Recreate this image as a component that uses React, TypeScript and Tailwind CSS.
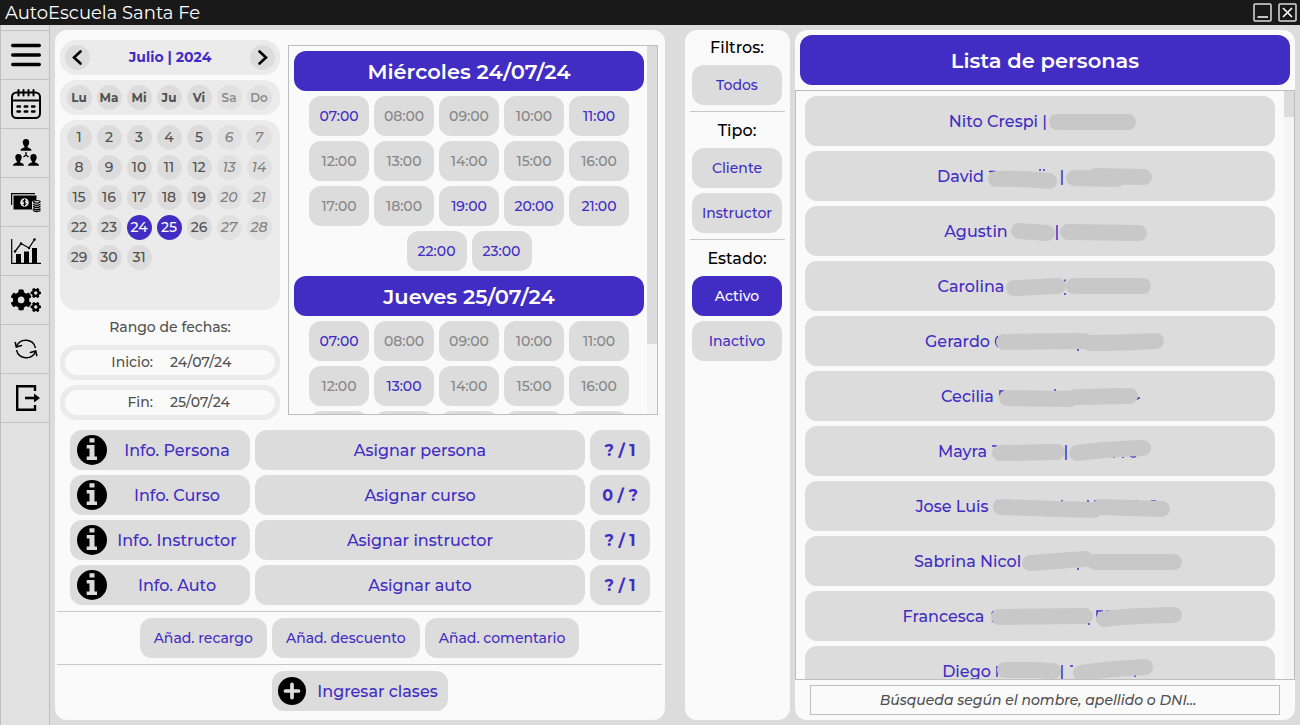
import type { ReactNode } from "react";
import { FaCogs } from "react-icons/fa";

const weekdays = ["Lu", "Ma", "Mi", "Ju", "Vi", "Sa", "Do"];
const days = Array.from({ length: 31 }, (_, i) => i + 1);
const selectedDays = [24, 25];

const schedule = [
  { title: "Miércoles 24/07/24", from: 7, to: 23, free: [7, 11, 19, 20, 21, 22, 23] },
  { title: "Jueves 25/07/24", from: 7, to: 23, free: [7, 13] },
];

const assignments = [
  { info: "Info. Persona", action: "Asignar persona", count: "? / 1" },
  { info: "Info. Curso", action: "Asignar curso", count: "0 / ?" },
  { info: "Info. Instructor", action: "Asignar instructor", count: "? / 1" },
  { info: "Info. Auto", action: "Asignar auto", count: "? / 1" },
];

/* `start` and `end` are the horizontal span of the masked part inside a 470-wide row. */
type Person = {
  name: string;
  start: number;
  end: number;
  mask: string;
  bar?: number;
  marks?: string;
};

const people: Person[] = [
  { name: "Nito Crespi |", start: 243, end: 327, mask: "M253 26L324 26" },
  { name: "David", start: 179, end: 338, mask: "M191 28Q215 27 244 30M269 27L312 28M290 25L339 26", bar: 257, marks: "M184 20.5h7M235 20v-2M239 20v-2M268 20.500h5M275 20.500h4" },
  { name: "Agustin", start: 203, end: 331, mask: "M214 25L242 27M263 26L334 27", bar: 252 },
  { name: "Carolina", start: 199, end: 337, mask: "M209 27L253 25M269 25L338 25", marks: "M260 18.500v2M260 32v2" },
  { name: "Gerardo", start: 186, end: 351, mask: "M200 26L280 25M286 27Q315 27 352 25", marks: "M194 20Q189 25 194 31M274 33v2" },
  { name: "Cecilia", start: 189, end: 334, mask: "M202 27L265 28M270 26L325 25", marks: "M195 25V20H199M250 18v2M332 29l1 -2h2" },
  { name: "Mayra", start: 182, end: 337, mask: "M195 27L252 26M272 27Q300 23 338 22", bar: 261, marks: "M187 20h5M208 20h2M309 31v1M318 31v1M325 30q4 2 6 0" },
  { name: "Jose Luis", start: 184, end: 360, mask: "M196 26Q245 28 289 29M295 26L357 28", marks: "M191 20h1M256 20h2M283 22v-3M289 20h4M307 20h8M328 20h5M346 20h5" },
  { name: "Sabrina Nicol", start: 216, end: 361, mask: "M225 27L280 23M290 26L369 26", marks: "M273 32v2" },
  { name: "Francesca", start: 180, end: 373, mask: "M195 26L281 25M300 28Q320 25 370 24", marks: "M190 20q-3 2 -1 4M188 30l2 1M285 34v-2M293 26V20h6M302 20h4" },
  { name: "Diego", start: 185, end: 332, mask: "M199 24H230L247 25M275 27Q300 23 339 21", bar: 256, marks: "M191 20v11M264 20h3M328 30h2" },
];

function Glyph({ children, className = "size-[30px]" }: { children: ReactNode; className?: string }) {
  return (
    <svg viewBox="0 0 30 30" className={className} fill="none" stroke="black" aria-hidden="true">
      {children}
    </svg>
  );
}

const MenuGlyph = () => (
  <Glyph>
    <path d="M1.700 5.500h26.600M1.700 15h26.600M1.700 24.500h26.600" strokeWidth="3.400" strokeLinecap="round" />
  </Glyph>
);

const CalendarGlyph = () => (
  <Glyph>
    <rect x="1" y="3.500" width="28" height="25.500" rx="4.500" strokeWidth="2" />
    <path d="M1 11.500h28" strokeWidth="2" />
    <path d="M7.500 1v5.500M12.500 1v5.500M17.500 1v5.500M22.500 1v5.500" strokeWidth="2" strokeLinecap="round" />
    <path d="M6.500 17.500h2.500M13.700 17.500h2.600M21 17.500h2.500M6.500 22.500h2.500M13.700 22.500h2.600M21 22.500h2.500" strokeWidth="2.400" strokeLinecap="round" />
  </Glyph>
);

const person = "M0 -6.500C2.200 -6.500 3.400 -5 3.200 -2.800C3 -1.200 2.300 0 1.600 .8V2C4 2.800 5.500 3.200 5.500 5.200H-5.500C-5.500 3.200 -4 2.800 -1.600 2V.8C-2.300 0 -3 -1.200 -3.200 -2.800C-3.400 -5 -2.200 -6.500 0 -6.500Z";

const PeopleGlyph = () => (
  <Glyph>
    <g fill="black" stroke="none">
      <path d={person} transform="translate(15 7.500)" />
      <path d={person} transform="translate(7.500 22.500)" />
      <path d={person} transform="translate(22.500 22.500)" />
    </g>
    <path d="M15 14v3.500M15 17l-2.500 2M15 17l2.500 2" strokeWidth="1.300" />
  </Glyph>
);

const MoneyGlyph = () => (
  <Glyph>
    <path d="M.6 18V6.600H24" strokeWidth="1.200" />
    <path d="M2.500 8.500H25.500V22.500H2.500Z" fill="black" stroke="none" />
    <circle cx="13.500" cy="15.500" r="4.300" fill="#e1e1e1" stroke="none" />
    <path d="M15 13.800C14.500 12.800 12 12.900 12 14.300C12 15.800 15 15 15 16.700C15 18.200 12.300 18.200 11.900 17M13.500 12v7" strokeWidth="1" />
    <path d="M21 14.500Q25.500 11 30 14.500V22Q25.500 26 21 22Z" fill="#e1e1e1" stroke="none" />
    <ellipse cx="25.800" cy="14.800" rx="3.300" ry="1.300" strokeWidth="1.200" />
    <path d="M22 17.200q3.800 2.200 7.500 0M22 19.400q3.800 2.200 7.500 0M22 21.600q3.800 2.200 7.500 0M22 23.500q3.800 2 7.500 0" strokeWidth="1.300" />
  </Glyph>
);

const ChartGlyph = () => (
  <Glyph>
    <path d="M.7 3V27.300H30" strokeWidth="1.200" />
    <path d="M5 18h5v9H5ZM13 15.500h5V27H13ZM21 12h5V27H21Z" fill="black" stroke="none" />
    <path d="M4 15.500L10 7.500L18 12L23.500 3.500" strokeWidth="1.300" />
    <g fill="black" stroke="none">
      <circle cx="4" cy="15.500" r="1.200" />
      <circle cx="10" cy="7.500" r="1.200" />
      <circle cx="18" cy="12" r="1.200" />
      <circle cx="23.500" cy="3.500" r="1.300" />
    </g>
  </Glyph>
);

const RefreshGlyph = () => (
  <Glyph>
    <path d="M5.500 12.500A10 10 0 0 1 24.500 14M24.500 17.500A10 10 0 0 1 5.500 16" strokeWidth="1.400" />
    <path d="M4.300 8.500L5.300 13L10.500 11.500M25.700 21.500L24.700 17L19.500 18.500" strokeWidth="1.600" strokeLinecap="round" />
  </Glyph>
);

const ExitGlyph = () => (
  <Glyph>
    <path d="M24 8V3.200H6.200V26.800H24V22" strokeWidth="2.400" />
    <path d="M14 15H25" strokeWidth="2.600" />
    <path d="M23 10.500L29 15L23 19.500Z" fill="black" stroke="none" />
  </Glyph>
);

const InfoGlyph = () => (
  <Glyph className="size-[30px] shrink-0">
    <circle cx="15" cy="15" r="15" fill="black" stroke="none" />
    <path d="M12.500 3.200h5v4.300h-5ZM9.700 10h7.800v11.500H20V25H9.700V21.500h2.800V13.500H9.700Z" fill="#dcdcdc" stroke="none" />
  </Glyph>
);

const PlusGlyph = () => (
  <Glyph className="size-[28px] shrink-0">
    <circle cx="15" cy="15" r="15" fill="black" stroke="none" />
    <path d="M15 8v14M8 15h14" stroke="#dcdcdc" strokeWidth="4" strokeLinecap="round" />
  </Glyph>
);

const nav = [
  { label: "Menú", icon: <MenuGlyph /> },
  { label: "Calendario", icon: <CalendarGlyph /> },
  { label: "Personas", icon: <PeopleGlyph /> },
  { label: "Pagos", icon: <MoneyGlyph /> },
  { label: "Estadísticas", icon: <ChartGlyph /> },
  { label: "Ajustes", icon: <FaCogs className="size-[30px] text-black" aria-hidden="true" /> },
  { label: "Actualizar", icon: <RefreshGlyph /> },
  { label: "Salir", icon: <ExitGlyph /> },
];

function TitleBar() {
  return (
    <header className="flex h-[25px] shrink-0 items-center justify-between bg-[#191919] pr-[3px] pl-[5px] text-white">
      <h1 className="pt-[2px] text-[18px] font-normal">AutoEscuela Santa Fe</h1>
      <div className="flex gap-[6px]">
        <button aria-label="Minimizar">
          <svg viewBox="0 0 19 19" className="size-[19px]" fill="none" stroke="#dcdcdc">
            <rect x="1" y="1" width="17" height="17" rx="1" strokeWidth="1.500" />
            <path d="M4.500 14h10.500" stroke="white" strokeWidth="1.500" />
          </svg>
        </button>
        <button aria-label="Cerrar">
          <svg viewBox="0 0 19 19" className="size-[19px]" fill="none" stroke="#dcdcdc">
            <rect x="1" y="1" width="17" height="17" rx="1" strokeWidth="1.500" />
            <path d="M5 5l9 9M14 5l-9 9" stroke="white" strokeWidth="1.600" />
          </svg>
        </button>
      </div>
    </header>
  );
}

function Sidebar() {
  return (
    <nav className="w-[50px] shrink-0 border-x border-[#bebebe] bg-[#e1e1e1] pt-[5px]">
      <ul className="border-t border-[#c3c3c3]">
        {nav.map((item) => (
          <li key={item.label} className="border-b border-[#c3c3c3]">
            <button aria-label={item.label} className="flex h-12 w-full items-center justify-center pl-[2px]">
              {item.icon}
            </button>
          </li>
        ))}
      </ul>
    </nav>
  );
}

function ArrowButton({ label, d }: { label: string; d: string }) {
  return (
    <button aria-label={label} className="flex size-[25px] items-center justify-center rounded-full bg-[#dcdcdc]">
      <svg viewBox="0 0 25 25" className="size-[25px]" fill="none" stroke="black" strokeWidth="2.600" strokeLinecap="round">
        <path d={d} />
      </svg>
    </button>
  );
}

function Calendar() {
  return (
    <div className="flex w-[220px] shrink-0 flex-col gap-[5px] pt-[5px] text-[#505050]">
      <div className="flex h-[35px] items-center justify-between rounded-[16px] bg-[#ebebeb] px-[5px]">
        <ArrowButton label="Mes anterior" d="M15.500 6.500L9 12.500L15.500 18.500" />
        <h2 className="text-[14px] font-bold text-[#412dc3]">Julio | 2024</h2>
        <ArrowButton label="Mes siguiente" d="M9.500 6.500L16 12.500L9.500 18.500" />
      </div>
      <div className="grid grid-cols-7 justify-items-center rounded-[16px] bg-[#ebebeb] py-[5px] pr-[6px] pl-[4px]">
        {weekdays.map((d, i) => (
          <span
            key={d}
            className={`flex size-[25px] items-center justify-center rounded-full text-[12px] ${i > 4 ? "bg-[#e1e1e1] font-semibold text-[#8c8c8c]" : "bg-[#dcdcdc] font-bold"}`}
          >
            {d}
          </span>
        ))}
      </div>
      <div className="grid h-[190px] grid-cols-7 content-start justify-items-center gap-y-[5px] rounded-[16px] bg-[#ebebeb] py-[5px] pr-[6px] pl-[4px]">
        {days.map((d) => {
          const tone = selectedDays.includes(d)
            ? "bg-[#412dc3] text-white"
            : d % 7 === 6 || d % 7 === 0
              ? "bg-[#e1e1e1] text-[#828282] italic"
              : "bg-[#dcdcdc]";
          return (
            <button key={d} className={`flex size-[25px] items-center justify-center rounded-full text-[14px] ${tone}`}>
              {d}
            </button>
          );
        })}
      </div>
      <p className="flex h-[25px] items-center justify-center text-[14px]">Rango de fechas:</p>
      {[
        ["Inicio:", "24/07/24"],
        ["Fin:", "25/07/24"],
      ].map(([label, date]) => (
        <dl key={label} className="h-[35px] rounded-[16px] bg-[#ebebeb] p-[5px] text-[14px]">
          <div className="flex h-[25px] items-center rounded-full bg-[#fafafa]">
            <dt className="w-[88px] text-right">{label}</dt>
            <dd className="pl-[17px]">{date}</dd>
          </div>
        </dl>
      ))}
    </div>
  );
}

function Schedule() {
  return (
    <div className="mt-[10px] flex h-[370px] min-w-0 flex-1 border border-[#bebebe]">
      <div className="flex flex-1 flex-col gap-[5px] overflow-y-auto pt-[5px] pr-[3px] pl-[5px] [scrollbar-width:none]">
        {schedule.map((day) => (
          <section key={day.title} className="flex flex-col gap-[5px]">
            <h2 className="flex h-10 items-center justify-center rounded-[12px] bg-[#412dc3] pt-[2px] text-[21px] font-semibold text-white">
              {day.title}
            </h2>
            <div className="flex flex-wrap justify-center gap-[5px] px-[10px]">
              {Array.from({ length: day.to - day.from + 1 }, (_, i) => day.from + i).map((h) => (
                <button
                  key={h}
                  className={`h-10 w-[60px] rounded-[12px] bg-[#dcdcdc] text-[14px] ${day.free.includes(h) ? "text-[#412dc3]" : "text-[#878787]"}`}
                >
                  {String(h).padStart(2, "0")}:00
                </button>
              ))}
            </div>
          </section>
        ))}
      </div>
      <div className="w-[10px] bg-[#f5f5f5]">
        <div className="h-[81%] bg-[#dcdcdc]" />
      </div>
    </div>
  );
}

const pill = "h-10 rounded-[12px] bg-[#dcdcdc] text-[#412dc3]";

function ClassPanel() {
  return (
    <main className="flex min-w-0 flex-[61] flex-col rounded-[12px] bg-[#fafafa]">
      <div className="flex gap-2 pt-[5px] pr-[7px] pl-[5px]">
        <Calendar />
        <Schedule />
      </div>
      <div className="mt-[10px] flex flex-col gap-[5px] px-[15px] text-[16px]">
        {assignments.map((a) => (
          <div key={a.info} className="grid grid-cols-[180px_1fr_60px] gap-[5px]">
            <button className={`${pill} flex items-center pr-[3px] pl-[7px]`}>
              <InfoGlyph />
              <span className="flex-1 pt-[2px] whitespace-nowrap">{a.info}</span>
            </button>
            <button className={`${pill} pt-[2px]`}>{a.action}</button>
            <output className={`${pill} flex items-center justify-center pt-[2px] font-bold`}>{a.count}</output>
          </div>
        ))}
      </div>
      <div className="mt-[6px] mr-[3px] ml-[2px] flex justify-center gap-[5px] border-y border-[#c8c8c8] py-[6px] text-[14px]">
        <button className={`${pill} px-[14px]`}>Añad. recargo</button>
        <button className={`${pill} px-[14px]`}>Añad. descuento</button>
        <button className={`${pill} px-[14px]`}>Añad. comentario</button>
      </div>
      <button className={`${pill} mt-[6px] flex items-center gap-[11px] self-center pr-[10px] pl-[6px] text-[16px]`}>
        <PlusGlyph />
        <span className="pt-[2px]">Ingresar clases</span>
      </button>
    </main>
  );
}

function FilterGroup({ label, options, active }: { label: string; options: string[]; active?: string }) {
  return (
    <section className="mx-[5px] flex flex-col gap-[5px] border-[#c8c8c8] pr-[3px] pb-[6px] pl-[2px] not-first:pt-px not-last:border-b">
      <h2 className="flex h-[30px] items-center justify-center pt-[5px] text-[16px] text-black">{label}</h2>
      {options.map((o) => (
        <button
          key={o}
          className={`h-10 rounded-[12px] text-[14px] ${o === active ? "bg-[#412dc3] text-white" : "bg-[#dcdcdc] text-[#412dc3]"}`}
        >
          {o}
        </button>
      ))}
    </section>
  );
}

function PersonRow({ p }: { p: Person }) {
  return (
    <button className="flex h-[50px] w-full shrink-0 items-center justify-center rounded-[12px] bg-[#dcdcdc] text-[16px] whitespace-nowrap text-[#412dc3]">
      <span className="pt-[2px]">{p.name}</span>
      <svg
        viewBox={`${p.start} 0 ${p.end - p.start} 50`}
        width={p.end - p.start}
        height="50"
        className="shrink-0 overflow-visible"
        fill="none"
        aria-hidden="true"
      >
        {p.marks && <path d={p.marks} stroke="#412dc3" strokeWidth="1.500" />}
        {p.bar && (
          <text x={p.bar} y="31" textAnchor="middle" fill="#412dc3" fontSize="16">
            |
          </text>
        )}
        <path d={p.mask} stroke="#c8c8c8" strokeWidth="16" strokeLinecap="round" strokeLinejoin="round" />
      </svg>
    </button>
  );
}

function PeoplePanel() {
  return (
    <aside className="flex min-w-0 flex-[50] flex-col rounded-[12px] bg-[#fafafa]">
      <h2 className="m-[5px] flex h-[50px] shrink-0 items-center justify-center rounded-[12px] bg-[#412dc3] pt-[2px] text-[21px] font-semibold text-white">
        Lista de personas
      </h2>
      <div className="flex min-h-0 flex-1 border border-[#bebebe]">
        <div className="flex flex-1 flex-col gap-[5px] overflow-y-auto px-[9px] pt-[5px] [scrollbar-width:none]">
          {people.map((p) => (
            <PersonRow key={p.name} p={p} />
          ))}
        </div>
        <div className="w-[10px] bg-[#f5f5f5]">
          <div className="h-[26px] bg-[#dcdcdc]" />
        </div>
      </div>
      <input
        type="search"
        aria-label="Buscar personas"
        placeholder="Búsqueda según el nombre, apellido o DNI..."
        className="mx-[15px] my-[5px] h-[30px] shrink-0 border border-[#bebebe] text-center text-[14px] font-medium italic placeholder:text-[#505050]"
      />
    </aside>
  );
}

export default function App() {
  return (
    <div className="flex h-screen flex-col bg-[#dcdcdc] font-['Montserrat','Inter',sans-serif] font-medium">
      <TitleBar />
      <div className="flex min-h-0 flex-1">
        <Sidebar />
        <div className="flex min-w-0 flex-1 gap-[5px] p-[5px]">
          <ClassPanel />
          <div className="ml-[15px] w-[105px] shrink-0 rounded-[12px] bg-[#fafafa]">
            <FilterGroup label="Filtros:" options={["Todos"]} />
            <FilterGroup label="Tipo:" options={["Cliente", "Instructor"]} />
            <FilterGroup label="Estado:" options={["Activo", "Inactivo"]} active="Activo" />
          </div>
          <PeoplePanel />
        </div>
      </div>
    </div>
  );
}
